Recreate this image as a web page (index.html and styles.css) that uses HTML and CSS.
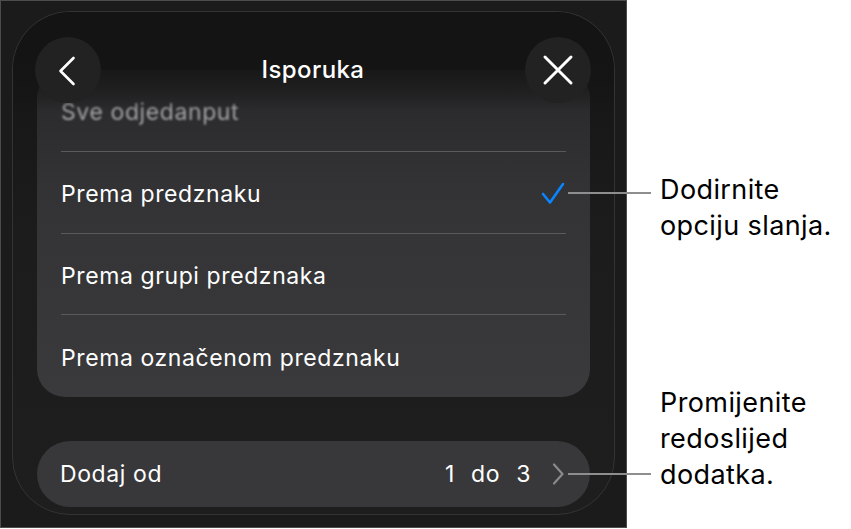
FILE: index.html
```html
<!DOCTYPE html>
<html lang="hr">
<head>
    <meta charset="UTF-8">
    <meta name="viewport" content="width=device-width, initial-scale=1.0">
    <title>Isporuka</title>
    <link rel="stylesheet" href="styles.css">
</head>
<body>
    <div class="page">
        <div class="device">
            <div class="sheet">
                <div class="sheet-header">
                    <button class="round-btn" aria-label="Natrag">
                        <svg width="66" height="66" viewBox="0 0 66 66">
                            <path d="M38.5 21 L25.5 34 L38.5 47" fill="none" stroke="#fff" stroke-width="2.6" stroke-linecap="round" stroke-linejoin="round"/>
                        </svg>
                    </button>
                    <div class="sheet-title">Isporuka</div>
                    <button class="round-btn" aria-label="Zatvori">
                        <svg width="66" height="66" viewBox="0 0 66 66">
                            <path d="M20 20 L46 46 M46 20 L20 46" fill="none" stroke="#fff" stroke-width="3" stroke-linecap="round"/>
                        </svg>
                    </button>
                </div>

                <div class="option-list">
                    <div class="option option--faded">Sve odjedanput</div>
                    <div class="option option--checked">
                        <span>Prema predznaku</span>
                        <svg class="check" width="26" height="24" viewBox="0 0 26 24">
                            <path d="M3 13 L10 21.5 L23 3" fill="none" stroke="#0a84ff" stroke-width="2.6" stroke-linecap="round" stroke-linejoin="round"/>
                        </svg>
                    </div>
                    <div class="option">Prema grupi predznaka</div>
                    <div class="option">Prema označenom predznaku</div>
                </div>

                <div class="add-row">
                    <span>Dodaj od</span>
                    <span class="add-row__value">
                        1 do 3
                        <svg width="14" height="24" viewBox="0 0 14 24">
                            <path d="M3 2.5 L11.5 12 L3 21.5" fill="none" stroke="#8a8a8e" stroke-width="2.2" stroke-linecap="round" stroke-linejoin="round"/>
                        </svg>
                    </span>
                </div>
            </div>
        </div>

        <div class="notes">
            <p class="note note--first">Dodirnite<br>opciju slanja.</p>
            <p class="note note--second">Promijenite<br>redoslijed<br>dodatka.</p>
        </div>

        <div class="leader leader--first"></div>
        <div class="leader leader--second"></div>
    </div>
</body>
</html>
```

FILE: styles.css
```css
body {
    margin: 0;
    background-color: #fff;
    font-family: Inter, "Noto Sans", sans-serif;
}

.page {
    position: relative;
    display: flex;
    width: 851px;
    height: 529px;
}

.device {
    width: 627px;
    height: 528px;
    box-sizing: border-box;
    border: 1px solid #4c4c4c;
    background-color: #1b1b1c;
    padding: 10px 11px 12px 11px;
}

.sheet {
    position: relative;
    height: 100%;
    box-sizing: border-box;
    border: 1px solid #333335;
    border-radius: 58px;
    background: linear-gradient(to bottom, #141414 0, #1c1c1d 45%, #1e1e1f 100%);
    padding: 58px 24px 7px 24px;
    display: flex;
    flex-direction: column;
}

.sheet-header {
    position: absolute;
    top: 0;
    left: 0;
    right: 0;
    height: 100px;
    padding: 25px 23px 0 22px;
    box-sizing: border-box;
    display: flex;
    justify-content: space-between;
    align-items: flex-start;
    border-radius: 58px 58px 0 0;
    background: linear-gradient(to bottom, rgba(20, 20, 20, 1) 45%, rgba(20, 20, 20, 0.45) 80%, rgba(20, 20, 20, 0) 100%);
    z-index: 2;
}

.round-btn {
    width: 66px;
    height: 66px;
    padding: 0;
    border: none;
    border-radius: 50%;
    background-color: #222223;
}

.round-btn svg {
    display: block;
}

.sheet-title {
    color: #fff;
    font-size: 24px;
    font-weight: 500;
    letter-spacing: 0.4px;
    line-height: 66px;
}

.option-list {
    border-radius: 28px;
    background: linear-gradient(to bottom, #28282a 0, #333335 120px, #3a3a3c 100%);
    padding: 0 24px;
}

.option {
    height: 82px;
    display: flex;
    align-items: center;
    justify-content: space-between;
    color: #fff;
    font-size: 23px;
    letter-spacing: 0.6px;
    border-top: 1px solid #5a5a5d;
    padding-top: 3px;
    box-sizing: border-box;
}

.option:first-child {
    border-top: none;
    height: 81px;
}

.option:nth-child(3) {
    height: 81px;
}

.option:last-child {
    height: 83px;
}

.option--faded {
    color: #a4a4a6;
    filter: blur(1.2px);
}

.check {
    margin-top: -3px;
}

.add-row {
    margin-top: 44px;
    height: 66px;
    border-radius: 33px;
    background-color: #38383a;
    display: flex;
    align-items: center;
    justify-content: space-between;
    padding: 0 25px 0 23px;
    color: #fff;
    font-size: 23px;
    letter-spacing: 0.6px;
}

.add-row__value {
    display: flex;
    align-items: center;
    gap: 20px;
    word-spacing: 9px;
}

.notes {
    margin-left: 33px;
    padding-top: 172px;
}

.note {
    margin: 0;
    color: #000;
    font-size: 27px;
    letter-spacing: 0.4px;
    line-height: 36px;
}

.note--second {
    margin-top: 141px;
}

.leader {
    position: absolute;
    left: 568px;
    width: 83px;
    height: 2px;
    background-color: #8e8e8e;
}

.leader--first {
    top: 192px;
}

.leader--second {
    top: 473px;
}
```
